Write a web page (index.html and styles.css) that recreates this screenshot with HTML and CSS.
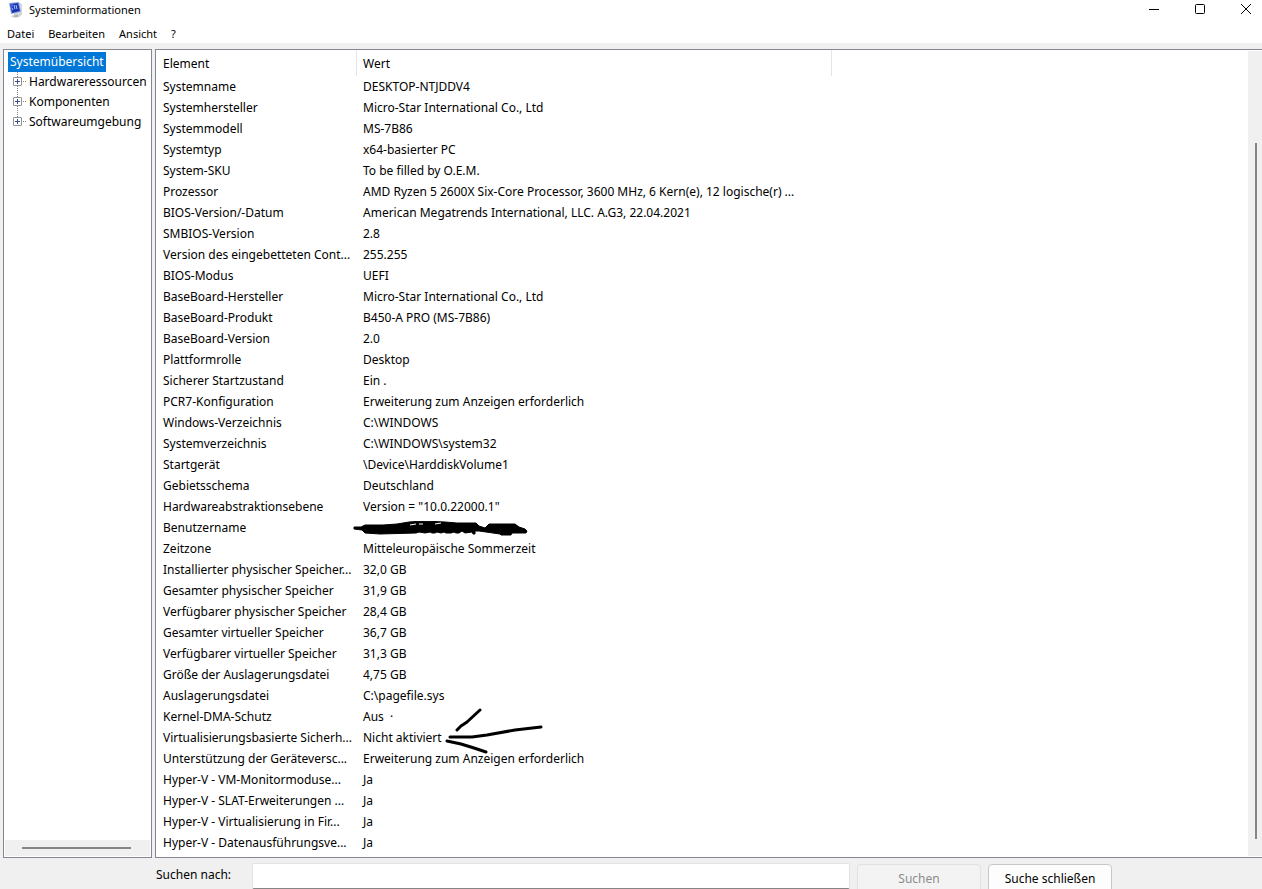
FILE: index.html
```html
<!DOCTYPE html>
<html lang="de">
<head>
  <meta charset="UTF-8">
  <title>Systeminformationen</title>
  <link rel="stylesheet" href="styles.css">
</head>
<body>
  <header class="titlebar">
    <svg class="app-icon" width="16" height="18" viewBox="0 0 16 18">
      <path d="M9 2l3 0 2 1 0 11-3 1z" fill="#d3d6e0"/>
      <path d="M6 12l4 0 2 2 1 1-5 2-4-1-1-1 3-1z" fill="#cfd1d6"/>
      <path d="M5 15l4-1 2 1-3 1z" fill="#a9acb5"/>
      <path d="M1 2l10-1 2 10-10 2z" fill="#93a4dc"/>
      <path d="M2 3l8-1 2 8-8 2z" fill="#1a35b0"/>
      <path d="M2 3l3 0 0 3-2 1z" fill="#3f62d8"/>
      <path d="M6 4l1 4M8 4l1 4M4 7l1 2" stroke="#a9c4ff" fill="none"/>
    </svg>
    <h1>Systeminformationen</h1>
    <div class="window-buttons">
      <button aria-label="Minimieren"><svg width="12" height="12" viewBox="0 0 12 12"><path d="M1 6.500h10" stroke="#000"/></svg></button>
      <button aria-label="Maximieren"><svg width="12" height="12" viewBox="0 0 12 12"><rect x="1.500" y="1.500" width="9" height="9" rx="1" fill="none" stroke="#000"/></svg></button>
      <button aria-label="Schließen"><svg width="12" height="12" viewBox="0 0 12 12"><path d="M1 1l10 10M11 1L1 11" stroke="#000"/></svg></button>
    </div>
  </header>

  <nav class="menu">
    <button>Datei</button>
    <button>Bearbeiten</button>
    <button>Ansicht</button>
    <button>?</button>
  </nav>

  <main class="content">
    <aside class="tree">
      <ul>
        <li class="root"><a href="#" class="selected">Systemübersicht</a></li>
        <li class="node"><button class="expand" aria-label="Hardwareressourcen erweitern"></button><a href="#">Hardwareressourcen</a></li>
        <li class="node"><button class="expand" aria-label="Komponenten erweitern"></button><a href="#">Komponenten</a></li>
        <li class="node"><button class="expand" aria-label="Softwareumgebung erweitern"></button><a href="#">Softwareumgebung</a></li>
      </ul>
      <div class="scroll-x"><div class="thumb-x"></div></div>
    </aside>

    <section class="details">
      <div class="table-area">
        <table>
          <thead>
            <tr><th class="col-name">Element</th><th class="col-value">Wert</th><th></th></tr>
          </thead>
          <tbody>
            <tr><td>Systemname</td><td>DESKTOP-NTJDDV4</td></tr>
            <tr><td>Systemhersteller</td><td>Micro-Star International Co., Ltd</td></tr>
            <tr><td>Systemmodell</td><td>MS-7B86</td></tr>
            <tr><td>Systemtyp</td><td>x64-basierter PC</td></tr>
            <tr><td>System-SKU</td><td>To be filled by O.E.M.</td></tr>
            <tr><td>Prozessor</td><td>AMD Ryzen 5 2600X Six-Core Processor, 3600 MHz, 6 Kern(e), 12 logische(r) ...</td></tr>
            <tr><td>BIOS-Version/-Datum</td><td>American Megatrends International, LLC. A.G3, 22.04.2021</td></tr>
            <tr><td>SMBIOS-Version</td><td>2.8</td></tr>
            <tr><td>Version des eingebetteten Cont...</td><td>255.255</td></tr>
            <tr><td>BIOS-Modus</td><td>UEFI</td></tr>
            <tr><td>BaseBoard-Hersteller</td><td>Micro-Star International Co., Ltd</td></tr>
            <tr><td>BaseBoard-Produkt</td><td>B450-A PRO (MS-7B86)</td></tr>
            <tr><td>BaseBoard-Version</td><td>2.0</td></tr>
            <tr><td>Plattformrolle</td><td>Desktop</td></tr>
            <tr><td>Sicherer Startzustand</td><td>Ein .</td></tr>
            <tr><td>PCR7-Konfiguration</td><td>Erweiterung zum Anzeigen erforderlich</td></tr>
            <tr><td>Windows-Verzeichnis</td><td>C:\WINDOWS</td></tr>
            <tr><td>Systemverzeichnis</td><td>C:\WINDOWS\system32</td></tr>
            <tr><td>Startgerät</td><td>\Device\HarddiskVolume1</td></tr>
            <tr><td>Gebietsschema</td><td>Deutschland</td></tr>
            <tr><td>Hardwareabstraktionsebene</td><td>Version = "10.0.22000.1"</td></tr>
            <tr>
              <td>Benutzername</td>
              <td class="marked">
                <svg class="scribble" width="176" height="18" viewBox="0 0 176 18">
                  <path d="M1 6L8 6 12 4 30 4 44 3 56 1 70 0 92 1 104 2 123 2 126 5 132 7 136 3 162 3 166 6 172 8 174 10 173 12 159 12 158 14 148 14 147 13 133 11 126 10 122 10 122 13 120 13 119 11 112 12 109 10 106 12 103 12 101 11 98 12 93 12 91 11 88 12 84 11 82 12 79 12 77 11 72 12 66 11 63 12 27 13 12 12 9 9 1 8z" fill="#000" stroke="#000"/>
                  <path d="M57 4l6-1M66 3l4 0M82 3l6-1" stroke="#fff" fill="none"/>
                </svg>
              </td>
            </tr>
            <tr><td>Zeitzone</td><td>Mitteleuropäische Sommerzeit</td></tr>
            <tr><td>Installierter physischer Speicher...</td><td>32,0 GB</td></tr>
            <tr><td>Gesamter physischer Speicher</td><td>31,9 GB</td></tr>
            <tr><td>Verfügbarer physischer Speicher</td><td>28,4 GB</td></tr>
            <tr><td>Gesamter virtueller Speicher</td><td>36,7 GB</td></tr>
            <tr><td>Verfügbarer virtueller Speicher</td><td>31,3 GB</td></tr>
            <tr><td>Größe der Auslagerungsdatei</td><td>4,75 GB</td></tr>
            <tr><td>Auslagerungsdatei</td><td>C:\pagefile.sys</td></tr>
            <tr><td>Kernel-DMA-Schutz</td><td>Aus &nbsp;·</td></tr>
            <tr>
              <td>Virtualisierungsbasierte Sicherh...</td>
              <td class="marked">Nicht aktiviert
                <svg class="arrow" width="98" height="46" viewBox="0 0 98 46">
                  <path d="M12 22L16 18 22 14 35 2M5 29H27L42 27 70 22 96 19M2 33L16 36 29 40 41 44" fill="none" stroke="#000" stroke-width="3" stroke-linecap="round" stroke-linejoin="round"/>
                </svg>
              </td>
            </tr>
            <tr><td>Unterstützung der Geräteversc...</td><td>Erweiterung zum Anzeigen erforderlich</td></tr>
            <tr><td>Hyper-V - VM-Monitormoduse...</td><td>Ja</td></tr>
            <tr><td>Hyper-V - SLAT-Erweiterungen ...</td><td>Ja</td></tr>
            <tr><td>Hyper-V - Virtualisierung in Fir...</td><td>Ja</td></tr>
            <tr><td>Hyper-V - Datenausführungsve...</td><td>Ja</td></tr>
          </tbody>
        </table>
      </div>
      <div class="scroll-y"><div class="thumb-y"></div></div>
    </section>
  </main>

  <form class="search">
    <label for="searchInput">Suchen nach:</label>
    <input type="text" id="searchInput">
    <button type="button" disabled>Suchen</button>
    <button type="button">Suche schließen</button>
  </form>
</body>
</html>
```

FILE: styles.css
```css
* {
  box-sizing: border-box;
}

body {
  margin: 0;
  height: 100vh;
  overflow: hidden;
  display: flex;
  flex-direction: column;
  background: #f0f0f0;
  color: #000;
  font-family: "Segoe UI", "Noto Sans", sans-serif;
  font-size: 12px;
  line-height: 20px;
}

button,
input {
  font: inherit;
  color: inherit;
}

a {
  color: inherit;
  text-decoration: none;
}

.titlebar {
  display: flex;
  align-items: center;
  height: 20px;
  padding-left: 8px;
  background: #fff;
}

.titlebar h1 {
  flex: 1;
  margin: 0 0 0 5px;
  font-size: 11px;
  font-weight: normal;
}

.window-buttons {
  display: flex;
}

.window-buttons button {
  display: flex;
  align-items: center;
  justify-content: center;
  width: 46px;
  height: 20px;
  padding: 0 0 2px;
  border: none;
  background: none;
}

.window-buttons button:last-child {
  width: 32px;
  margin-left: 7px;
}

.menu {
  display: flex;
  gap: 14px;
  height: 23px;
  padding: 4px 7px 0;
  background: #fff;
  font-size: 11px;
}

.menu button {
  height: 20px;
  padding: 0;
  border: none;
  background: none;
}

.content {
  flex: 1;
  min-height: 0;
  display: flex;
  gap: 3px;
  padding: 6px 0 0 3px;
}

.tree {
  display: flex;
  flex-direction: column;
  width: 149px;
  padding: 1px;
  border: 1px solid #828790;
  background: #fff;
}

.tree ul {
  flex: 1;
  margin: 0;
  padding: 1px 0 0 3px;
  list-style: none;
  overflow: hidden;
}

.tree li {
  display: flex;
  align-items: center;
  height: 20px;
  white-space: nowrap;
}

.selected {
  padding: 0 2px;
  background: #0078d7;
  color: #fff;
}

/* dotted connector lines between the nodes */
.node {
  padding-left: 5px;
  background:
    repeating-linear-gradient(#808080 0 1px, transparent 1px 2px) 9px 0 / 1px 20px no-repeat,
    repeating-linear-gradient(to right, #808080 0 1px, transparent 1px 2px) 9px 9px / 9px 1px no-repeat;
}

.node:last-child {
  background-size: 1px 10px, 9px 1px;
}

.expand {
  width: 9px;
  height: 9px;
  margin: 0 7px 2px 0;
  padding: 0;
  border: 1px solid #919191;
  border-radius: 1px;
  background:
    linear-gradient(#3c4f8c, #3c4f8c) center / 5px 1px no-repeat,
    linear-gradient(#3c4f8c, #3c4f8c) center / 1px 5px no-repeat,
    #fff;
}

.scroll-x {
  height: 16px;
  padding: 7px 19px 7px 17px;
  background: #f0f0f0;
}

.thumb-x {
  height: 2px;
  background: #858585;
}

.details {
  flex: 1;
  min-width: 0;
  display: flex;
  border: 1px solid #828790;
  border-right: none;
  background: #fff;
}

.table-area {
  flex: 1;
  min-width: 0;
  overflow: hidden;
}

table {
  width: 100%;
  table-layout: fixed;
  border-collapse: separate;
  border-spacing: 0;
}

th {
  height: 26px;
  padding: 1px 0 0 6px;
  border-right: 1px solid #e5e5e5;
  font-weight: normal;
  text-align: left;
}

th:last-child {
  border: none;
}

.col-name {
  width: 201px;
  padding-left: 7px;
}

.col-value {
  width: 475px;
}

td {
  height: 21px;
  padding: 0 0 0 6px;
  white-space: nowrap;
}

td:first-child {
  padding-left: 7px;
}

.marked {
  position: relative;
}

.scribble {
  position: absolute;
  left: -4px;
  top: 4px;
}

.arrow {
  position: absolute;
  left: 88px;
  top: -19px;
}

.scroll-y {
  display: flex;
  width: 14px;
  margin: 1px 0;
  padding: 92px 5px 17px 7px;
  background: #f0f0f0;
}

.thumb-y {
  width: 2px;
  background: #858585;
}

.search {
  display: flex;
  align-items: flex-start;
  height: 31px;
  padding: 5px 150px 0 156px;
}

.search label {
  width: 96px;
  padding-top: 2px;
}

.search input {
  flex: 1;
  min-width: 0;
  height: 26px;
  border: 1px solid #e3e3e3;
  border-bottom-color: #858585;
  border-radius: 2px;
  background: #fff;
}

.search button {
  width: 124px;
  height: 30px;
  margin: 1px 0 0 7px;
  border: 1px solid #c8c8c8;
  border-radius: 4px;
  background: #fdfdfd;
}

.search button:disabled {
  border-color: #e0e0e0;
  background: #f3f3f3;
  color: #8b8b8b;
}
```
